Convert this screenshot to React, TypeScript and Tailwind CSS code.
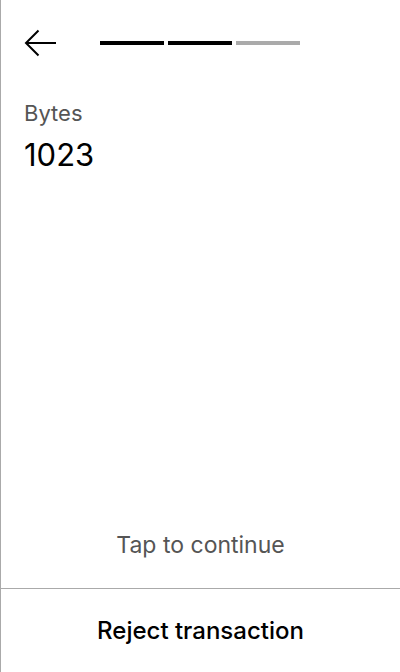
import React from 'react';

const BackArrow = () => (
  <svg width="32" height="28" viewBox="0 0 32 28" fill="none" stroke="#000" strokeWidth={2}>
    <path d="M32 14H2" />
    <path d="M14.5 1.5L2 14l12.5 12.5" />
  </svg>
);

const App: React.FC = () => {
  const steps = [true, true, false];

  return (
    <div className="h-[672px] w-[400px] bg-white border-l border-[#aaaaaa] flex flex-col text-black" style={{ fontFamily: 'Inter, "Noto Sans", sans-serif' }}>
      {/* Header */}
      <div className="flex items-center pt-[29px] pl-[23px]">
        <button className="w-[32px] h-[28px] flex items-center">
          <BackArrow />
        </button>
        <div className="flex gap-[4px] ml-[44px]">
          {steps.map((done, i) => (
            <div key={i} className={`w-[64px] h-[4px] ${done ? 'bg-black' : 'bg-[#aaaaaa]'}`} />
          ))}
        </div>
      </div>

      {/* Content */}
      <div className="pl-[23px] mt-[43px]">
        <p className="text-[22px] leading-[26px] text-[#555555]">Bytes</p>
        <p className="text-[31px] leading-[36px] mt-[11px]">1023</p>
      </div>

      <div className="flex-1" />

      <p className="text-center text-[23px] leading-[28px] text-[#555555] mb-[29px]">Tap to continue</p>

      <div className="border-t border-[#aaaaaa] h-[84px] flex items-center justify-center">
        <button className="text-[24px] font-medium">Reject transaction</button>
      </div>
    </div>
  );
};

export default App;
